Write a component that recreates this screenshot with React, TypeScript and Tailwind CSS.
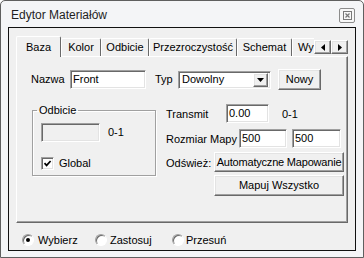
import React from "react";

const SUNKEN =
  "border border-t-[#a0a0a0] border-l-[#a0a0a0] border-r-white border-b-white shadow-[inset_1px_1px_0_#696969,inset_-1px_-1px_0_#e3e3e3]";
const RAISED =
  "border border-t-white border-l-white border-r-[#696969] border-b-[#696969] shadow-[inset_-1px_-1px_0_#a0a0a0,inset_1px_1px_0_#e3e3e3] bg-[#f0f0f0]";

const TABS = [
  { label: "Kolor", w: "w-[40px]" },
  { label: "Odbicie", w: "w-[48px]" },
  { label: "Przezroczystość", w: "w-[88px]" },
  { label: "Schemat", w: "w-[55px]" },
];

function Radio({ checked }: { checked?: boolean }) {
  return (
    <div className="w-[12px] h-[12px] rounded-full border border-t-[#a0a0a0] border-l-[#a0a0a0] border-r-white border-b-white shadow-[inset_1px_1px_0_#696969] bg-white flex items-center justify-center shrink-0">
      {checked && <div className="w-[4px] h-[4px] rounded-full bg-black" />}
    </div>
  );
}

export default function App() {
  return (
    <div className="w-[364px] h-[258px] bg-white font-['Liberation_Sans',Arial,sans-serif] text-[11px] leading-[13px] text-black">
      <div className="w-[364px] h-[258px] border border-[#5f5f5f] rounded-t-[5px] bg-[#f4f5f7] flex flex-col">
        {/* title bar */}
        <div className="h-[26px] flex items-center justify-between pl-[10px] pr-[8px] pt-[3px]">
          <span className="text-[12px] text-[#1e1e1e]">Edytor Materiałów</span>
          <div className="w-[16px] h-[15px] border border-[#8c8c8c] rounded-[2px] bg-[#f8f8f8] flex items-center justify-center">
            <svg width="9" height="9" viewBox="0 0 9 9">
              <rect x="0.5" y="0.5" width="8" height="8" fill="none" stroke="#7a7a7a" />
              <path d="M2.5 2.5 L6.5 6.5 M6.5 2.5 L2.5 6.5" stroke="#7a7a7a" strokeWidth="1.2" />
            </svg>
          </div>
        </div>

        {/* inner frame */}
        <div className="mx-[7px] h-[224px] border border-[#111] bg-[#f0f0f0] flex flex-col pt-[8px] pl-[7px] pr-[6px]">
          {/* tab strip */}
          <div className="h-[20px] flex items-end">
            <div className="relative z-10 w-[45px] h-[21px] -mb-[1px] bg-[#f0f0f0] border-l border-t border-r border-l-white border-t-white border-r-[#696969] rounded-t-[2px] flex items-center justify-center pt-[1px]">
              Baza
            </div>
            {TABS.map((t) => (
              <div
                key={t.label}
                className={`${t.w} h-[18px] border-l border-t border-r border-l-white border-t-white border-r-[#696969] rounded-t-[2px] flex items-center justify-center`}
              >
                {t.label}
              </div>
            ))}
            <div className="w-[22px] h-[18px] border-l border-t border-l-white border-t-white overflow-hidden pl-[5px] flex items-center">
              Wy
            </div>
            <div className="w-[34px] h-[14px] mb-[2px] flex">
              <div className={`${RAISED} w-[17px] h-[14px] flex items-center justify-center`}>
                <svg width="4" height="7" viewBox="0 0 4 7">
                  <path d="M4 0 L0 3.5 L4 7 Z" fill="#000" />
                </svg>
              </div>
              <div className={`${RAISED} w-[17px] h-[14px] flex items-center justify-center`}>
                <svg width="4" height="7" viewBox="0 0 4 7">
                  <path d="M0 0 L4 3.5 L0 7 Z" fill="#000" />
                </svg>
              </div>
            </div>
          </div>

          {/* tab panel */}
          <div className="w-[332px] h-[167px] border border-t-white border-l-white border-r-[#696969] border-b-[#696969] shadow-[inset_-1px_-1px_0_#a0a0a0] flex flex-col pt-[12px]">
            {/* row 1 */}
            <div className="h-[21px] flex items-center pl-[14px]">
              <span className="w-[39px]">Nazwa</span>
              <div className={`${SUNKEN} w-[76px] h-[19px] bg-white pl-[2px] flex items-center`}>Front</div>
              <span className="w-[23px] ml-[9px]">Typ</span>
              <div className={`${SUNKEN} w-[93px] h-[18px] bg-white pl-[3px] pr-[2px] flex items-center justify-between`}>
                <span>Dowolny</span>
                <div className={`${RAISED} w-[15px] h-[14px] flex items-center justify-center`}>
                  <svg width="7" height="4" viewBox="0 0 7 4">
                    <path d="M0 0 L7 0 L3.5 4 Z" fill="#000" />
                  </svg>
                </div>
              </div>
              <div className={`${RAISED} ml-[7px] w-[43px] h-[21px] flex items-center justify-center`}>Nowy</div>
            </div>

            {/* row 2 */}
            <div className="flex mt-[13px]">
              <fieldset className="ml-[15px] w-[124px] h-[73px] border border-[#a0a0a0] shadow-[inset_1px_1px_0_#fff,1px_1px_0_#fff]">
                <legend className="ml-[4px] px-[2px] leading-[14px]">Odbicie</legend>
                <div className="flex items-center mt-[6px] ml-[8px]">
                  <div className={`${SUNKEN} w-[59px] h-[19px] bg-[#f0f0f0]`} />
                  <span className="ml-[8px]">0-1</span>
                </div>
                <div className="flex items-center mt-[15px] ml-[8px]">
                  <div className={`${SUNKEN} w-[13px] h-[13px] bg-white flex items-center justify-center`}>
                    <svg width="9" height="9" viewBox="0 0 9 9">
                      <path d="M1.5 4.2 L3.6 6.4 L7.6 2" fill="none" stroke="#000" strokeWidth="1.7" />
                    </svg>
                  </div>
                  <span className="ml-[5px]">Global</span>
                </div>
              </fieldset>

              <div className="ml-[10px] flex flex-col">
                <div className="h-[20px] flex items-center">
                  <span className="w-[60px] pt-[3px]">Transmit</span>
                  <div className={`${SUNKEN} w-[43px] h-[19px] bg-white pl-[2px] flex items-center`}>0.00</div>
                  <span className="ml-[13px] pt-[2px]">0-1</span>
                </div>
                <div className="h-[20px] flex items-center mt-[5px]">
                  <span className="w-[73px] pt-[2px]">Rozmiar Mapy</span>
                  <div className={`${SUNKEN} w-[48px] h-[19px] bg-white pl-[2px] flex items-center`}>500</div>
                  <div className={`${SUNKEN} ml-[5px] w-[49px] h-[19px] bg-white pl-[2px] flex items-center`}>500</div>
                </div>
                <div className="h-[20px] flex items-center mt-[4px]">
                  <span className="w-[48px] pt-[2px]">Odśwież:</span>
                  <div className={`${RAISED} w-[130px] h-[20px] flex items-center justify-center tracking-[-0.2px]`}>
                    Automatyczne Mapowanie
                  </div>
                </div>
                <div className={`${RAISED} ml-[48px] mt-[3px] w-[130px] h-[21px] flex items-center justify-center`}>
                  Mapuj Wszystko
                </div>
              </div>
            </div>
          </div>

          {/* radio row */}
          <div className="mt-[10px] h-[14px] flex items-center pl-[6px]">
            <div className="w-[73px] flex items-center">
              <Radio checked />
              <span className="ml-[4px]">Wybierz</span>
            </div>
            <div className="w-[77px] flex items-center">
              <Radio />
              <span className="ml-[3px]">Zastosuj</span>
            </div>
            <div className="flex items-center">
              <Radio />
              <span className="ml-[2px]">Przesuń</span>
            </div>
          </div>
        </div>
      </div>
    </div>
  );
}
